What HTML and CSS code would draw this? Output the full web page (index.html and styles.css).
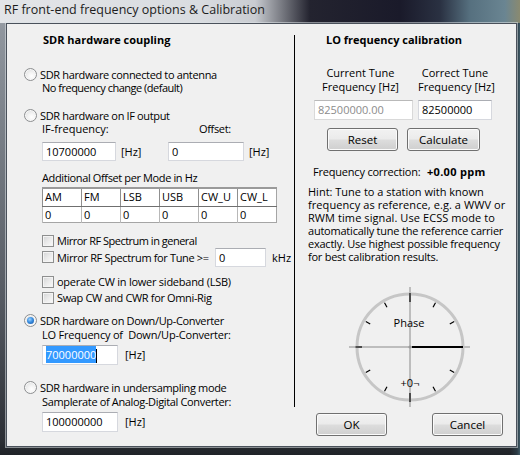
FILE: index.html
```html
<!DOCTYPE html>
<html>
<head>
<meta charset="utf-8">
<title>RF front-end frequency options &amp; Calibration</title>
<link rel="stylesheet" href="styles.css">
</head>
<body>
<div class="window">
  <div class="titlebar">RF front-end frequency options &amp; Calibration</div>
  <div class="client">
    <div class="left">
      <div class="heading">SDR hardware coupling</div>

      <div class="radio-row r1"><span class="radio"></span><span>SDR hardware connected to antenna</span></div>
      <div class="sub tight">No frequency change (default)</div>

      <div class="radio-row r2"><span class="radio"></span><span>SDR hardware on IF output</span></div>
      <div class="sub label-row"><span class="lbl-if">IF-frequency:</span><span>Offset:</span></div>
      <div class="field-row if-row">
        <span class="field-group"><span class="input w74">10700000</span><span class="unit">[Hz]</span></span>
        <span class="field-group"><span class="input w76">0</span><span class="unit">[Hz]</span></span>
      </div>
      <div class="sub add-off">Additional Offset per Mode in Hz</div>
      <table class="modes">
        <tr><th>AM</th><th>FM</th><th>LSB</th><th>USB</th><th>CW_U</th><th>CW_L</th></tr>
        <tr><td>0</td><td>0</td><td>0</td><td>0</td><td>0</td><td>0</td></tr>
      </table>

      <div class="check-row c1"><span class="check"></span><span class="tight">Mirror RF Spectrum in general</span></div>
      <div class="check-row c2"><span class="check"></span><span class="tune-lbl2">Mirror RF Spectrum for Tune &gt;=</span><span class="input khz">0</span><span class="unit">kHz</span></div>
      <div class="check-row c3"><span class="check"></span><span>operate CW in lower sideband (LSB)</span></div>
      <div class="check-row c4"><span class="check"></span><span>Swap CW and CWR for Omni-Rig</span></div>

      <div class="radio-row r3"><span class="radio checked"></span><span>SDR hardware on Down/Up-Converter</span></div>
      <div class="sub lo-lbl">LO Frequency of&nbsp; Down/Up-Converter:</div>
      <div class="field-row lo-row">
        <span class="input w75"><span class="sel">70000000</span><span class="caret"></span></span><span class="unit">[Hz]</span>
      </div>

      <div class="radio-row r4"><span class="radio"></span><span>SDR hardware in undersampling mode</span></div>
      <div class="sub">Samplerate of Analog-Digital Converter:</div>
      <div class="field-row sr-row">
        <span class="input w75">100000000</span><span class="unit">[Hz]</span>
      </div>
    </div>

    <div class="sep"></div>

    <div class="right">
      <div class="heading rh">LO frequency calibration</div>
      <div class="tune-grid">
        <div class="tune-lbl a">Current Tune<br>Frequency [Hz]</div>
        <div class="tune-lbl b">Correct Tune<br>Frequency [Hz]</div>
        <div class="input disabled wa">82500000.00</div>
        <div class="input wb">82500000</div>
      </div>
      <div class="btn-row calc">
        <div class="btn reset">Reset</div>
        <div class="btn calculate">Calculate</div>
      </div>
      <div class="corr"><span class="corr-lbl">Frequency correction:</span><b>+0.00 ppm</b></div>
      <div class="hint">
        <div class="hl l1">Hint: Tune to a station with known</div>
        <div class="hl l2">frequency as reference, e.g. a WWV or</div>
        <div class="hl l3">RWM time signal. Use ECSS mode to</div>
        <div class="hl l4">automatically tune the reference carrier</div>
        <div class="hl l5">exactly. Use highest possible frequency</div>
        <div class="hl l6">for best calibration results.</div>
      </div>
      <svg class="dial" width="124" height="124" viewBox="0 0 124 124">
        <line x1="1" y1="62" x2="122" y2="62" stroke="#8a8a8a" stroke-width="1"/>
        <line x1="62" y1="2" x2="62" y2="122" stroke="#8a8a8a" stroke-width="1"/>
        <circle cx="62" cy="62" r="53" fill="none" stroke="#c6c6c6" stroke-width="3"/>
        <g stroke="#000" stroke-width="1.2" fill="none">
          <line x1="62" y1="8" x2="62" y2="17"/>
          <line x1="62" y1="108" x2="62" y2="117"/>
          <line x1="7.5" y1="62" x2="14" y2="62"/>
          <line x1="101.8" y1="39" x2="106.2" y2="36.5"/>
          <line x1="85" y1="22.2" x2="87.5" y2="17.8"/>
          <line x1="39" y1="22.2" x2="36.5" y2="17.8"/>
          <line x1="22.2" y1="39" x2="17.8" y2="36.5"/>
          <line x1="22.2" y1="85" x2="17.8" y2="87.5"/>
          <line x1="39" y1="101.8" x2="36.5" y2="106.2"/>
          <line x1="85" y1="101.8" x2="87.5" y2="106.2"/>
          <line x1="101.8" y1="85" x2="106.2" y2="87.5"/>
        </g>
        <line x1="64" y1="62" x2="115" y2="62" stroke="#000" stroke-width="2.2"/>
        <circle cx="62" cy="62" r="1.6" fill="#9a9a9a"/>
        <text x="61" y="42" text-anchor="middle" class="dial-text">Phase</text>
        <text x="62" y="102" text-anchor="middle" class="dial-text">+0¬</text>
      </svg>
      <div class="btn-row ok-row">
        <div class="btn ok">OK</div>
        <div class="btn cancel">Cancel</div>
      </div>
    </div>
  </div>
</div>
</body>
</html>
```

FILE: styles.css
```css
* { box-sizing: border-box; }

body {
  margin: 0;
  width: 520px;
  height: 455px;
  overflow: hidden;
  background: #1f2228;
  font-family: "Open Sans", "Noto Sans", sans-serif;
  font-size: 11px;
  color: #000;
}

.window {
  width: 520px;
  height: 455px;
  background:
    linear-gradient(90deg, rgba(0,0,0,0) 0, rgba(0,0,0,0) 510px, #2b3a44 517px, #3f5a66 520px),
    linear-gradient(180deg, #a7acb3 0px, #90969e 30px, #7c828a 120px, #555a62 300px, #2c2f35 440px, #1f2227 455px);
}

.titlebar {
  height: 23px;
  padding-left: 4px;
  line-height: 20px;
  font-size: 12.5px;
  color: #1c1c1c;
  white-space: nowrap;
  background: linear-gradient(90deg, #e3e5e8 0px, #d9dce0 200px, #c9ccd1 255px, #6e7078 285px, #23232f 310px, #1a1a2a 400px, #2a3142 440px, #56707f 470px, #6a8592 505px, #8a8a70 520px);
}

.client {
  margin-left: 6px;
  width: 511px;
  height: 424px;
  background: #f0f0f0;
  border: 1px solid #4a515b;
  box-shadow: 0 0 0 1px rgba(220,225,230,0.55);
  display: flex;
  align-items: flex-start;
}

.left { width: 287px; flex: none; letter-spacing: -0.35px; }
.sep { width: 1px; height: 372px; margin-top: 11px; background: #000; flex: none; }
.right { width: 221px; flex: none; }

.heading {
  margin-top: 9px;
  height: 14px;
  line-height: 14px;
  padding-left: 36px;
  font-weight: 700;
  white-space: nowrap;
  letter-spacing: 0;
}
.heading.rh { padding-left: 31px; }

.tight { letter-spacing: -0.5px; }

/* radio rows */
.radio-row {
  height: 14px;
  display: flex;
  align-items: center;
  padding-left: 17px;
  white-space: nowrap;
}
.radio-row .radio { margin-right: 3px; }
.r1 { margin-top: 20px; }
.r2 { margin-top: 13px; }
.r3 { margin-top: 8px; }
.r4 { margin-top: 16px; }

.radio {
  width: 13px;
  height: 13px;
  border-radius: 50%;
  border: 1px solid #8d8f91;
  background: radial-gradient(circle at 60% 65%, #ffffff 0, #f4f4f4 35%, #d6d7d8 100%);
  box-shadow: inset 0 0 0 1px #f7f7f7;
  flex: none;
  position: relative;
}
.radio.checked::after {
  content: "";
  position: absolute;
  left: 2px;
  top: 2px;
  width: 7px;
  height: 7px;
  border-radius: 50%;
  background: radial-gradient(circle at 40% 35%, #9fd3ff 0, #3a8ee0 45%, #114f9e 100%);
}

.sub {
  height: 14px;
  line-height: 14px;
  padding-left: 35px;
  white-space: nowrap;
}
.lo-lbl { letter-spacing: -0.2px; }
.label-row { display: flex; }
.lbl-if { width: 157px; letter-spacing: 0; }
.add-off { margin-top: 10px; letter-spacing: -0.38px; }

/* inputs */
.input {
  display: inline-block;
  height: 19px;
  line-height: 17px;
  padding-left: 3px;
  background: #fff;
  border: 1px solid #d6d8de;
  border-top-color: #abadb3;
  white-space: nowrap;
  flex: none;
  letter-spacing: 0;
}
.w74 { width: 74px; }
.w76 { width: 76px; }
.w75 { width: 76px; height: 20px; line-height: 18px; }

.field-row {
  display: flex;
  align-items: center;
  padding-left: 35px;
}
.if-row { margin-top: 6px; height: 19px; }
.lo-row, .sr-row { margin-top: 3px; height: 20px; }
.field-group { display: flex; align-items: center; width: 131px; }
.unit { margin-left: 5px; white-space: nowrap; letter-spacing: 0; }
.lo-row .unit, .sr-row .unit { margin-left: 7px; }

.sel {
  background: #3399ff;
  color: #fff;
  padding: 1px 0;
}
.caret {
  display: inline-block;
  width: 1px;
  height: 14px;
  background: #000;
  vertical-align: middle;
}

/* table */
.modes {
  margin-top: 2px;
  margin-left: 35px;
  width: 235px;
  border-collapse: collapse;
  table-layout: fixed;
  background: #fff;
  border: 1px solid #a5a5a5;
  border-top: 2px solid #9a9a9a;
  letter-spacing: 0;
}
.modes th, .modes td {
  font-weight: 400;
  text-align: left;
  padding: 0 0 0 2px;
  white-space: nowrap;
  overflow: hidden;
}
.modes th {
  height: 18px;
  line-height: 16px;
  border-left: 1px solid #8f8f8f;
  border-bottom: 1px solid #6f6f6f;
}
.modes td {
  height: 16px;
  line-height: 15px;
  border-left: 1px solid #b8b8b8;
}

/* check rows */
.check-row {
  display: flex;
  align-items: center;
  padding-left: 35px;
  white-space: nowrap;
}
.check-row .check { margin-right: 3px; }
.c1 { margin-top: 11px; height: 14px; }
.c2 { height: 19px; }
.tune-lbl2 { width: 158px; }
.c2 .input { width: 51px; }
.c2 .unit { margin-left: 6px; }
.c3 { margin-top: 7px; height: 16px; letter-spacing: -0.25px; }
.c4 { height: 16px; }

.check {
  width: 12px;
  height: 12px;
  border: 1px solid #8e8f8f;
  background: linear-gradient(135deg, #d3d4d5 0%, #eaeaea 50%, #fbfbfb 100%);
  box-shadow: inset 0 0 0 1px #f4f4f4;
  flex: none;
}

/* right column */
.tune-grid {
  margin-top: 19px;
  display: grid;
  grid-template-columns: 99px 74px;
  column-gap: 5px;
  row-gap: 6px;
  padding-left: 19px;
}
.tune-lbl {
  line-height: 14px;
  text-align: center;
  white-space: nowrap;
}
.tune-lbl.a { padding-right: 6px; }
.tune-grid .input { height: 20px; line-height: 18px; width: auto; }
.input.disabled { color: #8c8c8c; border-color: #d9d9d9; border-top-color: #b9b9b9; }

.btn-row { display: flex; }
.calc { margin-top: 8px; padding-left: 32px; gap: 9px; }
.ok-row { margin-top: 4px; padding-left: 21px; gap: 45px; }

.btn {
  height: 23px;
  line-height: 21px;
  text-align: center;
  font-size: 11.5px;
  border: 1px solid #707070;
  border-radius: 3px;
  background: linear-gradient(180deg, #f2f2f2 0%, #ebebeb 48%, #dddddd 52%, #cfcfcf 100%);
  box-shadow: inset 0 0 0 1px #fbfbfb;
}
.reset { width: 71px; }
.calculate { width: 73px; }
.ok, .cancel { width: 71px; }

.corr {
  margin-top: 14px;
  height: 14px;
  line-height: 14px;
  padding-left: 18px;
  white-space: nowrap;
  display: flex;
}
.corr-lbl { width: 114px; flex: none; letter-spacing: -0.2px; }
.corr b { font-weight: 700; font-size: 11px; letter-spacing: 0.3px; }

.hint {
  margin-top: 6px;
  padding-left: 13px;
  white-space: nowrap;
}
.hl { height: 13px; line-height: 13px; }
.l2 { letter-spacing: 0.08px; }
.l3 { letter-spacing: 0.08px; }
.l4 { letter-spacing: -0.22px; }
.l5 { letter-spacing: -0.23px; }
.l6 { letter-spacing: -0.25px; }

.dial {
  display: block;
  margin-top: 22px;
  margin-left: 53px;
}
.dial-text {
  font-family: "Open Sans", "Noto Sans", sans-serif;
  font-size: 11px;
  fill: #000;
}
```
